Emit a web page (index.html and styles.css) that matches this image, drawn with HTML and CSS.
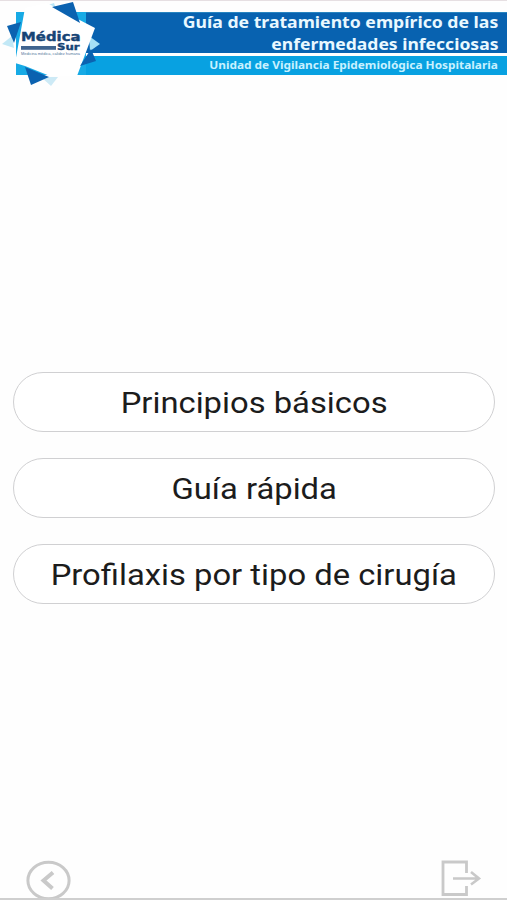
FILE: index.html
```
<!DOCTYPE html>
<html lang="es">
<head>
    <meta charset="UTF-8">
    <meta name="viewport" content="width=device-width, initial-scale=1.0">
    <title>Guía de tratamiento empírico</title>
    <link rel="stylesheet" href="styles.css">
</head>
<body>
    <header class="header">
        <div class="title-bar">
            <span class="title title-first">Guía de tratamiento empírico de las</span>
            <span class="title title-second">enfermedades infecciosas</span>
        </div>
        <div class="subtitle-bar">
            <span class="subtitle">Unidad de Vigilancia Epidemiológica Hospitalaria</span>
        </div>
        <svg class="logo" width="110" height="90" viewBox="0 0 110 90">
            <rect x="16" y="12" width="70" height="63" fill="#17aae5"/>
            <polygon points="45,6 54,3 56,9" fill="#b9e6f7"/>
            <polygon points="89,36 100,44 90,51" fill="#a4e0f6"/>
            <polygon points="2,44 12,36 14,48" fill="#c2e8f6"/>
            <polygon points="41,77 58,77 51,86" fill="#cdeaf6"/>
            <polygon points="25,8 47,3 95,28 77,76 50,76 25,66 15,63" fill="#fff"/>
            <polygon points="52,7 73,2 80,23" fill="#0b62b0"/>
            <polygon points="7,26 21,22 14,43" fill="#0b62b0"/>
            <polygon points="91,49 96,61 80,66" fill="#0b62b0"/>
            <polygon points="25,67 49,77 31,85" fill="#0b62b0"/>
            <text class="logo-name" x="21" y="40.5" textLength="59.5" lengthAdjust="spacingAndGlyphs">Médica</text>
            <text class="logo-name logo-sur" x="57" y="50" textLength="22.5" lengthAdjust="spacingAndGlyphs">Sur</text>
            <rect x="21" y="46" width="35" height="3.8" fill="#40648f"/>
            <text class="logo-tag" x="21" y="55" textLength="59" lengthAdjust="spacingAndGlyphs">Medicina médica, calidez humana</text>
        </svg>
    </header>

    <main class="menu">
        <button class="menu-btn"><span>Principios básicos</span></button>
        <button class="menu-btn"><span>Guía rápida</span></button>
        <button class="menu-btn"><span>Profilaxis por tipo de cirugía</span></button>
    </main>

    <footer class="footer">
        <svg class="icon" width="46" height="38" viewBox="0 0 46 38">
            <ellipse cx="23.5" cy="20.5" rx="20.6" ry="18.2" stroke-width="3"/>
            <path d="M28 12.5 18.5 20.5 27.5 28.5" stroke-width="4"/>
        </svg>
        <svg class="icon" width="44" height="38" viewBox="0 0 44 38">
            <path d="M27.5 13V2H4v32.500h23.500V26" stroke-width="2.8"/>
            <path d="M14 18.500H40M32 12l8 6.500-8 6" stroke-width="2.6"/>
        </svg>
    </footer>
</body>
</html>
```
FILE: styles.css
```
body {
    margin: 0;
    height: 900px;
    box-sizing: border-box;
    display: flex;
    flex-direction: column;
    overflow: hidden;
    background-color: #fefefe;
    border-top: 1px solid #e6dfe2;
    border-bottom: 2px solid #cfcfcf;
    font-family: Roboto, sans-serif;
}
.header {
    position: relative;
    height: 76px;
    padding-top: 11px;
    box-sizing: border-box;
    font-family: "Noto Sans", "Open Sans", sans-serif;
    font-weight: bold;
    color: #fff;
}
.title-bar {
    display: flex;
    flex-direction: column;
    align-items: flex-end;
    height: 41px;
    margin-left: 86px;
    padding-right: 9px;
    background-color: #0862b0;
    border-top: 1px solid #2784c0;
    box-sizing: border-box;
}
.title {
    font-size: 16px;
    line-height: 22px;
    white-space: nowrap;
    transform-origin: right;
    color: #e9f8ff;
}
.title-first {
    margin-top: -2px;
    transform: scaleX(1.102);
}
.title-second {
    transform: scaleX(1.095);
}
.subtitle-bar {
    display: flex;
    justify-content: flex-end;
    height: 19px;
    margin: 3px 0 0 86px;
    padding-right: 9px;
    background-color: #08a1e1;
}
.subtitle {
    font-size: 10.5px;
    line-height: 19px;
    white-space: nowrap;
    transform-origin: right;
    transform: scaleX(1.128);
    color: #c9f1ff;
}
/* the logo sits over both bars */
.logo {
    position: absolute;
    left: 0;
    top: -1px;
}
.logo-name {
    font: bold 12px "DejaVu Sans", sans-serif;
    fill: #164475;
    stroke: #164475;
    stroke-width: 0.4px;
}
.logo-sur {
    font-size: 9.5px;
}
.logo-tag {
    font: 3px "Liberation Sans", sans-serif;
    fill: #55789e;
}
.menu {
    display: flex;
    flex-direction: column;
    gap: 26px;
    padding: 295px 12px 0 13px;
}
.menu-btn {
    height: 60px;
    padding: 1px 0 0;
    background-color: #fff;
    border: 1px solid #d0d0d2;
    border-radius: 30px;
    font-family: Roboto, sans-serif;
    font-size: 29px;
    color: #1c1c1c;
    white-space: nowrap;
}
.menu-btn span {
    display: inline-block;
    transform: scaleX(1.13);
}
.footer {
    display: flex;
    justify-content: space-between;
    margin-top: auto;
    padding: 0 24px 0 25px;
}
.icon {
    display: block;
    overflow: visible;
    fill: none;
    stroke: #c9c9c9;
}
```
